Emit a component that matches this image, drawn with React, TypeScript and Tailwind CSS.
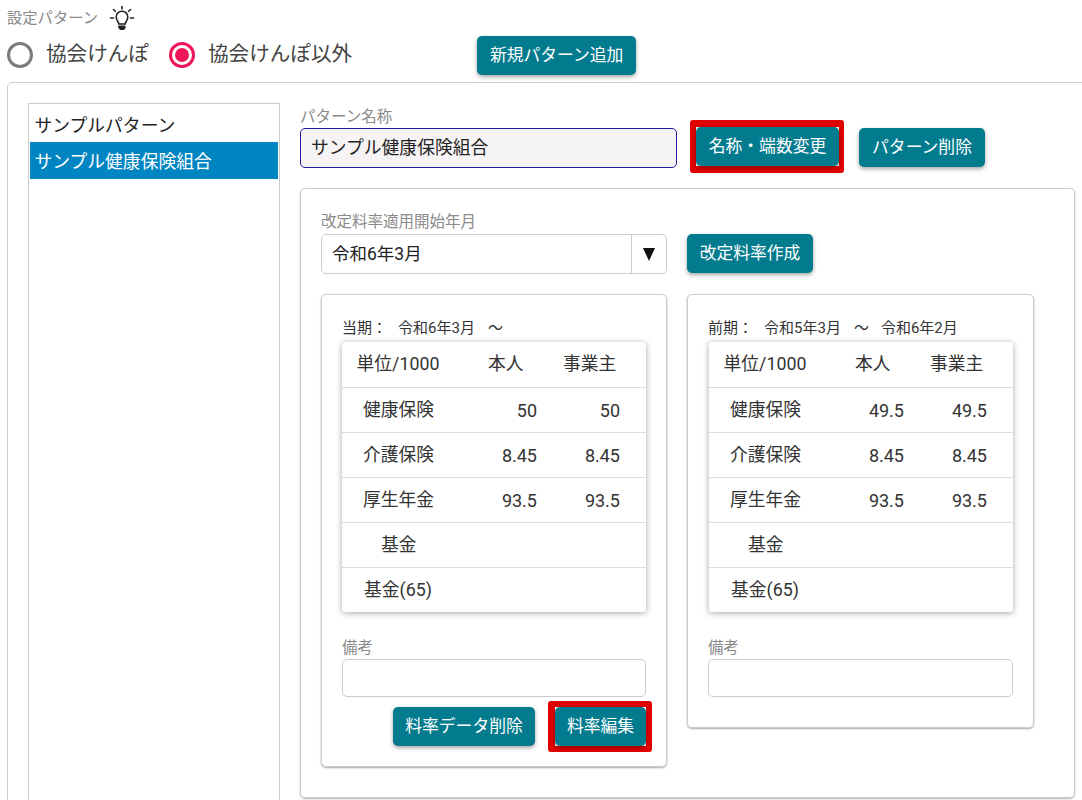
import React from 'react';

const rows = [
    { name: '健康保険', indent: 'pl-[21px]' },
    { name: '介護保険', indent: 'pl-[21px]' },
    { name: '厚生年金', indent: 'pl-[21px]' },
    { name: '基金', indent: 'pl-[39px]' },
    { name: '基金(65)', indent: 'pl-[22px]' },
];

const TealButton: React.FC<{ label: string; className?: string }> = ({ label, className = '' }) => (
    <button className={`h-[39px] rounded-[5px] bg-[#037b8e] text-[16.8px] text-white shadow-[0_2px_4px_rgba(0,0,0,0.35)] ${className}`}>
        {label}
    </button>
);

const Radio: React.FC<{ label: string; checked?: boolean }> = ({ label, checked }) => (
    <label className="flex items-center">
        {checked ? (
            <span className="flex h-[26px] w-[26px] items-center justify-center rounded-full border-[3px] border-[#ee1558]">
                <span className="h-[14px] w-[14px] rounded-full bg-[#ee1558]" />
            </span>
        ) : (
            <span className="h-[26px] w-[26px] rounded-full border-[3px] border-[#7b7b7b]" />
        )}
        <span className="ml-[13px] pb-[2px] text-[20.6px] text-[#444444]">{label}</span>
    </label>
);

const BulbIcon = () => (
    <svg width="26" height="26" viewBox="0 0 26 26" fill="none" stroke="#222222" strokeWidth="1.6" strokeLinecap="round">
        <path d="M13 1.5v2.5M4.5 4.5l1.8 1.8M21.5 4.5l-1.8 1.8M1.5 13h3M21.5 13h3" />
        <path d="M9.8 19c0-2.2-2.6-3.2-2.6-7a5.8 5.8 0 0 1 11.6 0c0 3.8-2.6 4.8-2.6 7z" />
        <path d="M10 21h6v2.2l-1 1.3h-4l-1-1.3z" fill="#222222" strokeWidth="1" />
    </svg>
);

const FieldLabel: React.FC<{ text: string; className?: string }> = ({ text, className = '' }) => (
    <div className={`text-[15.5px] leading-[23px] text-[#8a8a8a] ${className}`}>{text}</div>
);

const RateTable: React.FC<{ values: (string[] | null)[]; className?: string }> = ({ values, className = '' }) => (
    <div className={`w-[304px] rounded-[3px] bg-white text-[17.8px] text-[#333333] shadow-[0_1px_6px_rgba(0,0,0,0.35)] ${className}`}>
        <div className="grid h-[45px] grid-cols-[146px_75px_83px] items-center">
            <div className="pl-[14.5px]">単位/1000</div>
            <div>本人</div>
            <div>事業主</div>
        </div>
        {rows.map((row, i) => (
            <div key={row.name} className="grid h-[45px] grid-cols-[112px_83px_83px] items-center border-t border-[#dddddd] text-[18px]">
                <div className={`whitespace-nowrap text-[17.8px] ${row.indent}`}>{row.name}</div>
                <div className="text-right">{values[i]?.[0]}</div>
                <div className="text-right">{values[i]?.[1]}</div>
            </div>
        ))}
    </div>
);

const App: React.FC = () => {
    return (
        <div className="h-[800px] w-[1082px] overflow-hidden bg-white pl-[7px] font-[Roboto,'Noto_Sans_CJK_JP',sans-serif]">
            {/* header */}
            <div className="flex h-[36px] items-start pt-[5px]">
                <div className="text-[15.3px] leading-[26px] text-[#8a8a8a]">設定パターン</div>
                <div className="ml-[11px]">
                    <BulbIcon />
                </div>
            </div>
            <div className="flex h-[46px] items-start">
                <div className="flex h-[39px] items-center gap-[20px]">
                    <Radio label="協会けんぽ" />
                    <Radio label="協会けんぽ以外" checked />
                </div>
                <TealButton label="新規パターン追加" className="ml-[125px] w-[159px]" />
            </div>

            {/* outer panel */}
            <div className="flex w-[1100px] rounded-[5px] border border-[#cccccc] pl-[20px] pt-[20px]">
                <div className="h-[720px] w-[252px] shrink-0 border border-[#cccccc] px-px pt-[4px] text-[17.8px]">
                    <div className="flex h-[34px] items-center pl-[4.5px] pt-[3px] text-[#222222]">サンプルパターン</div>
                    <div className="flex h-[37px] items-center bg-[#0085c3] pl-[4.5px] pt-[4px] text-white">サンプル健康保険組合</div>
                </div>

                <div className="ml-[20px] w-[775px] shrink-0">
                    <div className="flex items-start">
                        <div className="w-[377px]">
                            <FieldLabel text="パターン名称" className="h-[25px] pt-[3px]" />
                            <div className="flex h-[40px] items-center rounded-[5px] border border-[#1c1c9c] bg-[#f5f3f3] pl-[10px] text-[17.8px] text-[#222222]">
                                サンプル健康保険組合
                            </div>
                        </div>
                        <div className="ml-[13px] mt-[17px] rounded-[3px] border-y-[7px] border-l-[6px] border-r-[5px] border-[#e00000]">
                            <TealButton label="名称・端数変更" className="block w-[143px]" />
                        </div>
                        <TealButton label="パターン削除" className="ml-[15px] mt-[25px] h-[38px] w-[126px]" />
                    </div>

                    {/* rate panel */}
                    <div className="mt-[15px] rounded-[5px] border border-[#cccccc] pb-[30px] pl-[20px] pt-[22px] shadow-[0_1px_2px_rgba(0,0,0,0.3)]">
                        <FieldLabel text="改定料率適用開始年月" />
                        <div className="flex items-start">
                            <div className="flex h-[40px] w-[346px] items-center rounded-[5px] border border-[#cccccc] text-[17.5px] text-[#222222]">
                                <span className="flex-1 pl-[10px]">令和6年3月</span>
                                <span className="flex h-full w-[35px] items-center justify-center border-l border-[#cccccc]">
                                    <svg width="12" height="13" viewBox="0 0 12 13">
                                        <path d="M0 0h12L6 13z" fill="#111111" />
                                    </svg>
                                </span>
                            </div>
                            <TealButton label="改定料率作成" className="ml-[20px] h-[38px] w-[126px]" />
                        </div>

                        <div className="mt-[20px] flex items-start gap-[20px]">
                            <div className="w-[346px] rounded-[5px] border border-[#cccccc] pb-[14px] pl-[20px] pt-[23px] shadow-[0_1px_2px_rgba(0,0,0,0.35)]">
                                <div className="flex h-[24px] text-[15px] leading-[20px] text-[#333333]">
                                    <span>当期：</span>
                                    <span className="ml-[11px]">令和6年3月</span>
                                    <span className="ml-[13px]">～</span>
                                </div>
                                <RateTable values={[['50', '50'], ['8.45', '8.45'], ['93.5', '93.5'], null, null]} />
                                <FieldLabel text="備考" className="mt-[25px] h-[22px]" />
                                <div className="h-[38px] w-[304px] rounded-[5px] border border-[#cccccc]" />
                                <div className="mt-[4px] flex w-[310px] items-center justify-end">
                                    <TealButton label="料率データ削除" className="mr-[13px] w-[142px]" />
                                    <div className="rounded-[3px] border-y-[6px] border-l-[7px] border-r-[6px] border-[#e00000]">
                                        <TealButton label="料率編集" className="block w-[91px]" />
                                    </div>
                                </div>
                            </div>

                            <div className="w-[347px] rounded-[5px] border border-[#cccccc] pb-[30px] pl-[20px] pt-[23px] shadow-[0_1px_2px_rgba(0,0,0,0.35)]">
                                <div className="flex h-[24px] text-[15px] leading-[20px] text-[#333333]">
                                    <span>前期：</span>
                                    <span className="ml-[11px]">令和5年3月</span>
                                    <span className="ml-[13px]">～</span>
                                    <span className="ml-[12px]">令和6年2月</span>
                                </div>
                                <RateTable className="ml-px" values={[['49.5', '49.5'], ['8.45', '8.45'], ['93.5', '93.5'], null, null]} />
                                <FieldLabel text="備考" className="mt-[25px] h-[22px]" />
                                <div className="h-[38px] w-[305px] rounded-[5px] border border-[#cccccc]" />
                            </div>
                        </div>
                    </div>
                </div>
            </div>
        </div>
    );
};

export default App;
